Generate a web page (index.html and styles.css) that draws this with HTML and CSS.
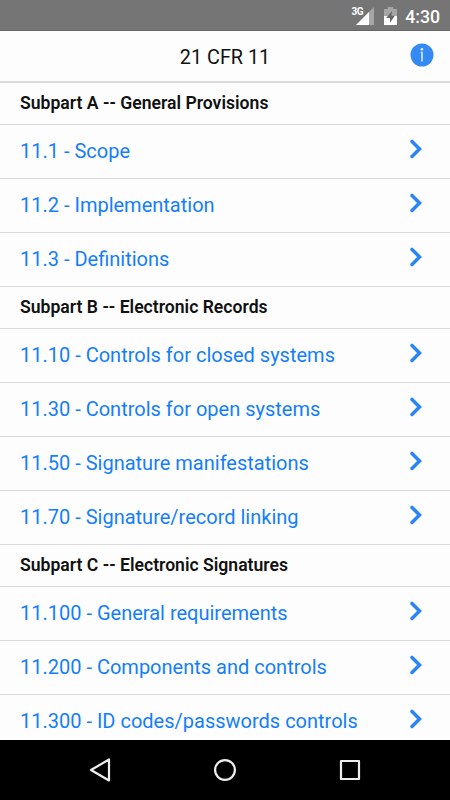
FILE: index.html
```html
<!DOCTYPE html>
<html lang="en">
<head>
<meta charset="utf-8">
<title>21 CFR 11</title>
<link rel="stylesheet" href="styles.css">
</head>
<body>
<svg width="0" height="0" class="defs"><symbol id="chevron" viewBox="0 0 14 20"><path d="M3 2.4 L10.5 9.9 L3 17.4" fill="none" stroke="#2a84f2" stroke-width="3.5" stroke-linecap="round"/></symbol></svg>
<div class="screen">
  <div class="status">
    <span class="network">3G</span>
    <svg class="signal" width="18" height="18" viewBox="0 0 18 18"><path d="M0 18 L18 0 V18Z" fill="#a6a6a6"/><path d="M0 18 L13 5 V18Z" fill="#fff"/></svg>
    <svg class="battery" width="13" height="18" viewBox="0 0 12 18" preserveAspectRatio="none"><path d="M3.5 0h5v2H12v7H0V2h3.5z" fill="#a6a6a6"/><path d="M0 9h12v9H0z" fill="#fff"/><path d="M7.5 4 L2 11h3.5v4.8L10 8.8H6.8z" fill="#666"/></svg>
    <span class="clock">4:30</span>
  </div>
  <header class="navbar">
    <h1 class="title">21 CFR 11</h1>
    <svg class="info" width="24" height="24" viewBox="0 0 24 24"><circle cx="12" cy="12" r="11.5" fill="#338af3"/><path d="M10.8 9.6h1.2V18.4" fill="none" stroke="#e0edff" stroke-width="1.5"/><circle cx="11.9" cy="6.2" r="1.3" fill="#e4f0ff"/></svg>
  </header>
  <main class="list">
    <h2 class="section">Subpart A -- General Provisions</h2>
    <a class="item"><span>11.1 - Scope</span><svg class="chevron"><use href="#chevron"/></svg></a>
    <a class="item"><span>11.2 - Implementation</span><svg class="chevron"><use href="#chevron"/></svg></a>
    <a class="item"><span>11.3 - Definitions</span><svg class="chevron"><use href="#chevron"/></svg></a>
    <h2 class="section">Subpart B -- Electronic Records</h2>
    <a class="item"><span>11.10 - Controls for closed systems</span><svg class="chevron"><use href="#chevron"/></svg></a>
    <a class="item"><span>11.30 - Controls for open systems</span><svg class="chevron"><use href="#chevron"/></svg></a>
    <a class="item"><span>11.50 - Signature manifestations</span><svg class="chevron"><use href="#chevron"/></svg></a>
    <a class="item"><span>11.70 - Signature/record linking</span><svg class="chevron"><use href="#chevron"/></svg></a>
    <h2 class="section">Subpart C -- Electronic Signatures</h2>
    <a class="item"><span>11.100 - General requirements</span><svg class="chevron"><use href="#chevron"/></svg></a>
    <a class="item"><span>11.200 - Components and controls</span><svg class="chevron"><use href="#chevron"/></svg></a>
    <a class="item"><span>11.300 - ID codes/passwords controls</span><svg class="chevron"><use href="#chevron"/></svg></a>
  </main>
  <nav class="softkeys">
    <svg width="26" height="26" viewBox="0 0 26 26"><path d="M22 2.5v21L4 13z"/></svg>
    <svg width="26" height="26" viewBox="0 0 26 26"><circle cx="13" cy="13" r="9.9"/></svg>
    <svg width="26" height="26" viewBox="0 0 26 26"><rect x="4" y="4" width="18" height="18"/></svg>
  </nav>
</div>
</body>
</html>
```
FILE: styles.css
```css
* { box-sizing: border-box; }
body { margin: 0; font-family: Roboto, sans-serif; background: #fdfdfd; }
.defs { position: absolute; }
.screen { width: 450px; height: 800px; display: flex; flex-direction: column; overflow: hidden; }
.status {
  flex: none; height: 31px; padding: 0 10px 0 0; background: #757575; color: #fff;
  display: flex; justify-content: flex-end; align-items: flex-start; border-bottom: 1px solid #656565;
}
.network { font-size: 10px; line-height: 10px; font-weight: 700; letter-spacing: -0.5px; margin: 7px -7px 0 0; z-index: 1; }
.signal { margin: 7px 10px 0 0; }
.battery { margin: 7px 8px 0 0; }
.clock { font-size: 17.7px; line-height: 22px; font-weight: 500; margin-top: 6px; }
.navbar {
  flex: none; height: 52px; padding: 0 16px; border-bottom: 2px solid #dadada;
  display: grid; grid-template-columns: 24px 1fr 24px; align-items: center;
}
.title { grid-column: 2; margin: 3px 0 0; text-align: center; font-size: 19.8px; font-weight: 400; line-height: 24px; color: #111; }
.info { margin-top: -3px; }
.list { flex: 1; min-height: 0; overflow: hidden; }
.section {
  margin: 0; height: 41.7px; padding: 0 20px 1px; border-bottom: 1px solid #d8d8d8;
  display: flex; align-items: center; font-size: 17.6px; font-weight: 600; color: #111;
}
.item {
  height: 54.15px; padding: 0 27px 1px 20px; border-bottom: 1px solid #d8d8d8;
  display: flex; align-items: center; justify-content: space-between; font-size: 20px; color: #147efb;
}
.chevron { width: 14px; height: 20px; margin-top: -4px; }
.softkeys {
  flex: none; height: 60px; padding: 0 87px; background: #000;
  display: flex; justify-content: space-between; align-items: center;
}
.softkeys svg { fill: none; stroke: #eee; stroke-width: 2.2; stroke-linejoin: round; }
```
